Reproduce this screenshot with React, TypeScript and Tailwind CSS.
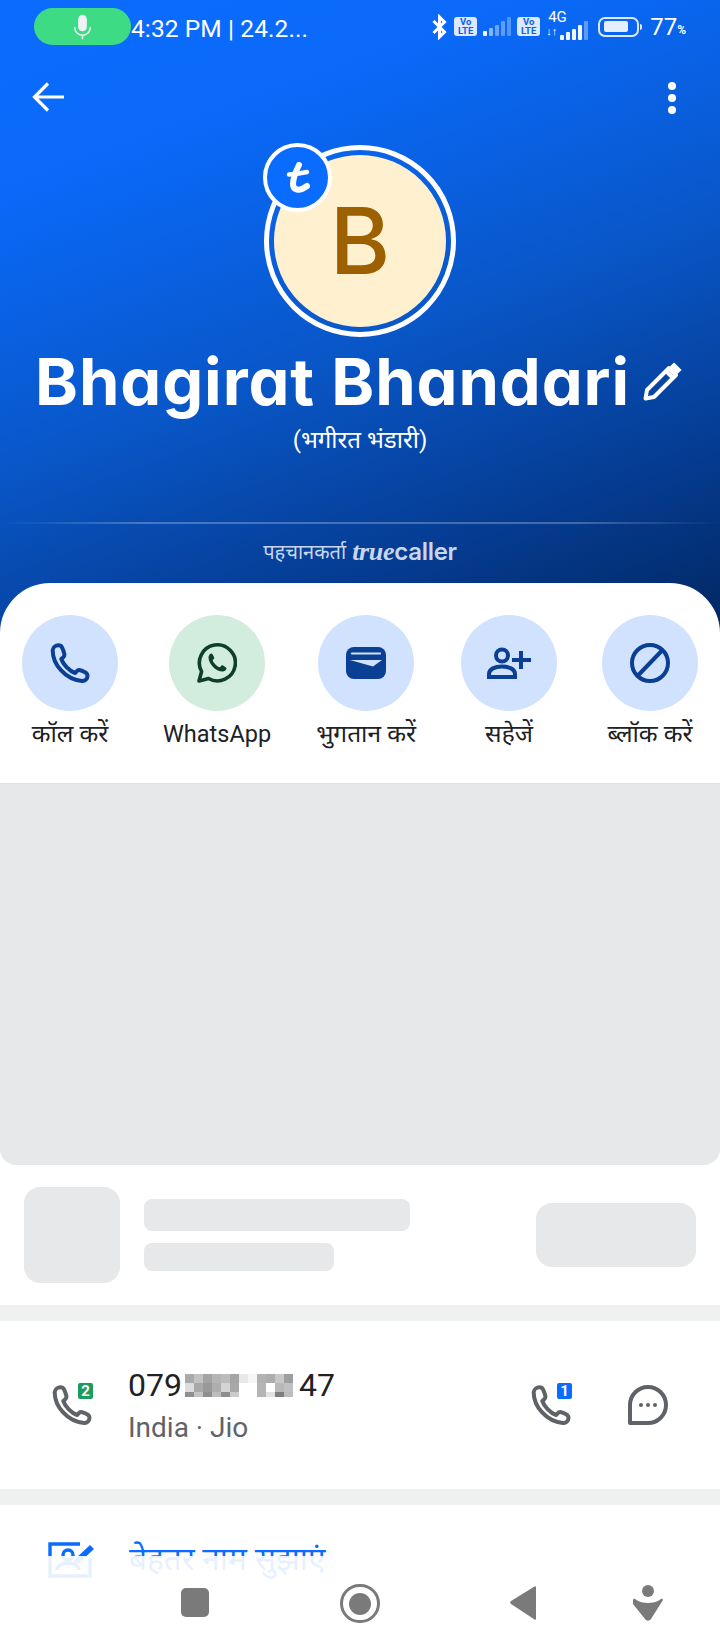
import React from "react";

const SANS = "font-['Roboto','Noto_Sans','Noto_Sans_Devanagari','Lohit_Devanagari',sans-serif]";

const Phone = ({ className = "", color = "#0b3f93" }: { className?: string; color?: string }) => (
  <svg viewBox="0 0 40 40" className={className} fill="none" stroke={color} strokeWidth={4} strokeLinejoin="round">
    <path d="M8.500 2.200c-3 0-5.600 2.200-5.800 5C2.600 21 15 36.500 32 38c2.800.2 5.500-2 5.500-5 0-1.800-.6-2.800-2-3.600-2-1.100-3.800-1.800-5.300-2.200-1.600-.4-2.800.1-3.700 1.200l-1.300 1.600C19 28 13 21 11.300 16l2-1.800c1-1 1.300-2.200 1-3.500C13.800 8.500 13 6.300 12 4.300 11.200 2.700 10 2.200 8.500 2.200Z" />
  </svg>
);

const Action = ({ label, bg, children, latin }: { label: string; bg: string; children: React.ReactNode; latin?: boolean }) => (
  <div className="flex min-w-[96px] flex-col items-center">
    <div className={`flex h-24 w-24 items-center justify-center rounded-full ${bg}`}>{children}</div>
    <span className={`mt-[8px] whitespace-nowrap leading-[30px] text-[#202124] ${latin ? "text-[23.5px]" : "text-[24.5px]"} ${SANS}`}>{label}</span>
  </div>
);

const PIX = [
  "#aaa #c2c2c2 #a4a4a4 #b5b5b5 #bcbcbc #a5a5a5 #e8e8e8 #f6f6f6 #b2b2b2 #adadad #c8c8c8 #9e9e9e",
  "#dcdcdc #a8a8a8 #999 #aeaeae #d4d4d4 #a8a8a8 #fff #fff #b5b5b5 #fff #b8b8b8 #c0c0c0",
  "#8f8f8f #c4c4c4 #8e8e8e #bdbdbd #8e8e8e #cacaca #fff #fff #b5b5b5 #e2e2e2 #7e7e7e #bcbcbc",
];

const Bars = ({ c }: { c: string[] }) => {
  const hs = ["h-[5px]", "h-[8px]", "h-[11px]", "h-[15px]", "h-[19px]"];
  return (
    <div className="flex h-[19px] items-end gap-[2px]">
      {hs.map((h, i) => (
        <span key={i} className={`w-[4px] rounded-[1px] ${h} ${c[i]}`} />
      ))}
    </div>
  );
};

const Volte = () => (
  <div className="flex h-[19px] w-[23px] flex-col items-center justify-center rounded-[3px] bg-[#dce9ff] font-['Roboto'] text-[9.5px] font-bold leading-[8.500px] text-[#0a63e8]">
    <span>Vo</span>
    <span>LTE</span>
  </div>
);

export default function App() {
  return (
    <div className={`relative h-[1650px] w-[720px] overflow-hidden bg-white ${SANS}`}>
      {/* Hero */}
      <div className="relative h-[640px] bg-[linear-gradient(160deg,#0a6cff_0%,#0a69f8_22%,#0957c9_52%,#053c92_78%,#02265f_100%)] text-white">
        {/* Status bar */}
        <div className="flex h-[53px] items-start pl-[34px] pr-[34px] pt-[8px]">
          <div className="flex h-[37px] w-[97px] items-center justify-center rounded-full bg-[#3ddc84]">
            <svg viewBox="0 0 24 30" className="h-[26px] w-[21px]" fill="none">
              <rect x="7" y="1" width="10" height="19" rx="5" fill="#eef2f6" />
              <path d="M3 15c0 6 4 9.500 9 9.500s9-3.500 9-9.500M12 24.500V29" stroke="#eef2f6" strokeWidth="1.800" />
            </svg>
          </div>
          <span className="mt-[2px] font-['Roboto'] text-[24.5px] leading-[37px] tracking-[0.1px]">4:32 PM | 24.2...</span>
          <div className="ml-auto flex h-[37px] items-center">
            <svg viewBox="0 0 16 26" className="h-[26px] w-[17px]" fill="none" stroke="#fff" strokeWidth="3">
              <path d="M2 7l11 11-5 5V3l5 5L2 19" />
            </svg>
            <div className="ml-[6px]"><Volte /></div>
            <div className="ml-[6px]"><Bars c={["bg-white/95", "bg-white/50", "bg-white/40", "bg-white/35", "bg-white/30"]} /></div>
            <div className="ml-[6px]"><Volte /></div>
            <div className="relative ml-[6px] h-[26px] w-[42px]">
              <span className="absolute left-[2px] top-[-4px] font-['Roboto'] text-[15px] leading-[15px]">4G</span>
              <span className="absolute left-0 top-[12px] font-['Roboto'] text-[11px] font-bold leading-[11px]">↓↑</span>
              <div className="absolute bottom-[0px] right-0"><Bars c={["bg-white/95", "bg-white/95", "bg-white/95", "bg-white/95", "bg-white/35"]} /></div>
            </div>
            <div className="ml-[10px] flex h-[20px] w-[41px] items-center rounded-[7px] border-2 border-[#dbe8ff] px-[4px]">
              <div className="h-[11px] w-[24px] rounded-[2px] bg-[#e6efff]" />
            </div>
            <span className="ml-[1px] h-[6px] w-[2px] rounded-r bg-[#dbe8ff]" />
            <span className="ml-[8px] mt-[2px] font-['Roboto'] text-[24px] leading-[37px]">77</span>
            <span className="mt-[8px] font-['Roboto'] text-[12px] font-bold leading-[37px]">%</span>
          </div>
        </div>

        {/* Toolbar */}
        <div className="flex h-[72px] items-start justify-between pl-[32px] pr-[44px] pt-[29px]">
          <svg viewBox="0 0 32 30" className="h-[30px] w-[32px]" fill="none" stroke="#fff" strokeWidth="3.200">
            <path d="M32 15H3M16 1.500L2.500 15 16 28.500" />
          </svg>
          <div className="flex flex-col gap-[4px]">
            <span className="h-[8px] w-[8px] rounded-full bg-white" />
            <span className="h-[8px] w-[8px] rounded-full bg-white" />
            <span className="h-[8px] w-[8px] rounded-full bg-white" />
          </div>
        </div>

        {/* Avatar */}
        <div className="relative mx-auto mt-[20px] flex h-[192px] w-[192px] items-center justify-center rounded-full border-[5px] border-white">
          <div className="flex h-[172px] w-[172px] items-center justify-center rounded-full bg-[#fff1cf] font-['Inter'] text-[92px] font-medium leading-none text-[#9c6000]">
            B
          </div>
          <div className="absolute left-[-6px] top-[-7px] flex h-[69px] w-[69px] items-center justify-center rounded-full border-[4px] border-white bg-[#0a6cff]">
            <svg viewBox="0 0 24 32" className="h-[32px] w-[24px]" fill="none" stroke="#fff" strokeWidth="6" strokeLinecap="round" strokeLinejoin="round">
              <path d="M13 3C10 9 7 16 7 22c0 6 6 8 14 2" />
              <path d="M3 12.500C9 12 14 11.500 21 10" strokeWidth="4.500" />
            </svg>
          </div>
        </div>

        {/* Name */}
        <div className="relative mt-[3px] flex h-[84px] items-center pl-[35px]">
          <span className="whitespace-nowrap font-['Inter'] text-[65px] font-bold leading-[84px] tracking-[0.9px] [font-feature-settings:'cv11']">
            Bhagirat Bhandari
          </span>
          <svg viewBox="0 0 40 40" className="ml-[12px] h-[40px] w-[40px]" fill="none" stroke="#fff" strokeWidth="4" strokeLinejoin="round">
            <path d="M3.500 36.500l1.500-8.500L27 6l7 7-22 22-8.500 1.500ZM24 9l7 7" />
            <path d="M30 2.500l7.500 7.500" strokeWidth="6" />
          </svg>
        </div>
        <p className="mt-0 text-center text-[24px] leading-[32px]">(भगीरत भंडारी)</p>

        {/* Divider */}
        <div className="mt-[66px] h-[2px] bg-[linear-gradient(90deg,transparent,rgba(255,255,255,0.25)_20%,rgba(255,255,255,0.25)_80%,transparent)]" />

        {/* Truecaller */}
        <div className="mt-[14px] flex h-[28px] items-center justify-center gap-[6px] text-[#c8d6ee]">
          <span className="text-[20px] leading-[28px]">पहचानकर्ता</span>
          <span className="font-['Inter'] text-[24px] font-semibold leading-[28px] tracking-[-0.3px]">
            <span className="font-['Liberation_Serif'] text-[26px] font-bold italic">true</span>caller
          </span>
        </div>
      </div>

      {/* Body */}
      <div className="absolute left-0 right-0 top-[583px]">
        <div className="rounded-t-[50px] bg-white">
          <div className="flex h-[200px] items-start justify-between px-[22px] pt-[32px]">
            <Action label="कॉल करें" bg="bg-[#d0e2fd]">
              <Phone className="h-[40px] w-[40px]" />
            </Action>
            <Action label="WhatsApp" bg="bg-[#d2ecdd]" latin>
              <svg viewBox="0 0 40 40" className="h-[40px] w-[40px]" fill="none">
                <path d="M2 38l2.600-9.500A18 18 0 1 1 11.500 35.500L2 38Z" stroke="#0e3f27" strokeWidth="3.600" strokeLinejoin="round" />
                <path d="M14.500 10.500c-1.500 0-3 1.800-3 4 0 6 7 14 14 14 2.200 0 4-1.700 4-3.200 0-.8-3.500-3-4.500-3-.8 0-1.500 2-2.300 2-2 0-7-5-7-7 0-.8 1.600-1.400 1.600-2.300 0-1-1.800-4.500-2.800-4.500Z" fill="#0e3f27" />
              </svg>
            </Action>
            <Action label="भुगतान करें" bg="bg-[#d0e2fd]">
              <svg viewBox="0 0 40 32" className="h-[32px] w-[40px]">
                <rect width="40" height="32" rx="8" fill="#0b3f93" />
                <path d="M6 6.500h28" stroke="#d0e2fd" strokeWidth="2.200" strokeLinecap="round" />
                <path d="M4 13h32L27 19.500 4 13Z" fill="#d0e2fd" />
              </svg>
            </Action>
            <Action label="सहेजें" bg="bg-[#d0e2fd]">
              <svg viewBox="0 0 44 32" className="h-[32px] w-[44px]" fill="none" stroke="#0b3f93" strokeWidth="4">
                <circle cx="15" cy="8.500" r="6" />
                <path d="M2 30v-3c0-5 6-7.500 13-7.500s13 2.500 13 7.500v3H2Z" />
                <path d="M34 4v18M25 13h19" />
              </svg>
            </Action>
            <Action label="ब्लॉक करें" bg="bg-[#d0e2fd]">
              <svg viewBox="0 0 40 40" className="h-[40px] w-[40px]" fill="none" stroke="#0b3f93" strokeWidth="4">
                <circle cx="20" cy="20" r="18" />
                <path d="M7.500 33 32.500 7" />
              </svg>
            </Action>
          </div>

          {/* Ad placeholder */}
          <div className="h-[382px] rounded-b-[16px] border-t border-[#e0e1e3] bg-[#e7e8ea]" />

          {/* Skeleton row */}
          <div className="flex h-[140px] items-center pl-[24px] pr-[24px]">
            <div className="h-[96px] w-[96px] rounded-[16px] bg-[#e7e8ea]" />
            <div className="ml-[24px] flex flex-col gap-[12px]">
              <div className="h-[32px] w-[266px] rounded-[8px] bg-[#e7e8ea]" />
              <div className="h-[28px] w-[190px] rounded-[8px] bg-[#e7e8ea]" />
            </div>
            <div className="ml-auto h-[64px] w-[160px] rounded-[16px] bg-[#e7e8ea]" />
          </div>
          <div className="h-[16px] bg-[#eff0f0]" />

          {/* Phone row */}
          <div className="flex h-[168px] items-center pl-[52px] pr-[52px]">
            <div className="relative h-[40px] w-[40px]">
              <Phone className="h-[40px] w-[40px]" color="#5f6368" />
              <span className="absolute right-[-1px] top-[-2px] flex h-[16px] w-[15px] items-center justify-center rounded-[2px] bg-[#1a9d5c] font-['Roboto'] text-[15px] font-bold leading-none text-white">2</span>
            </div>
            <div className="ml-[36px] mt-[2px]">
              <div className="flex h-[38px] items-center font-['Roboto'] text-[32px] leading-[38px] text-[#202124]">
                <span>079</span>
                <div className="w-[117px] pl-[3px]">
                  <div className="h-[23px] w-[108px]">
                    {PIX.map((row, i) => (
                      <div key={i} className={`flex ${i === 2 ? "h-[5px]" : "h-[9px]"}`}>
                        {row.split(" ").map((c, j) => (
                          <span key={j} className="flex-1" style={{ background: c }} />
                        ))}
                      </div>
                    ))}
                  </div>
                </div>
                <span>47</span>
              </div>
              <div className="mt-[6px] font-['Roboto'] text-[28px] leading-[36px] text-[#5f6368]">India · Jio</div>
            </div>
            <div className="ml-auto flex items-center gap-[57px]">
              <div className="relative h-[40px] w-[40px]">
                <Phone className="h-[40px] w-[40px]" color="#5f6368" />
                <span className="absolute right-[-1px] top-[-2px] flex h-[16px] w-[15px] items-center justify-center rounded-[2px] bg-[#0a6cff] font-['Roboto'] text-[15px] font-bold leading-none text-white">1</span>
              </div>
              <svg viewBox="0 0 40 40" className="h-[40px] w-[40px]" fill="none">
                <path d="M2 38V20a18 18 0 1 1 18 18H2Z" stroke="#5f6368" strokeWidth="4" strokeLinejoin="round" />
                <circle cx="13" cy="20" r="2" fill="#5f6368" />
                <circle cx="20" cy="20" r="2" fill="#5f6368" />
                <circle cx="27" cy="20" r="2" fill="#5f6368" />
              </svg>
            </div>
          </div>
          <div className="h-[16px] bg-[#eff0f0]" />

          {/* Suggest name */}
          <div className="flex h-[120px] items-start pl-[48px] pt-[37px]">
            <svg viewBox="0 0 48 36" className="h-[36px] w-[48px]" fill="none" stroke="#0a6cff" strokeWidth="3.400">
              <path d="M32 2H2v32h40V16" />
              <circle cx="20" cy="13" r="5" />
              <path d="M9 28c0-4 5-7 11-7s11 3 11 7" />
              <path d="M26 18l16-15 4 4-15 14-6 1 1-4Z" fill="#0a6cff" stroke="none" />
            </svg>
            <span className="ml-[33px] text-[31.5px] leading-[36px] text-[#0a6cff]">बेहतर नाम सुझाएं</span>
          </div>
        </div>
      </div>

      {/* Navigation bar overlay */}
      <div className="absolute bottom-0 left-0 right-0 h-[94px] bg-white/90">
        <div className="absolute left-[181px] top-[32px] h-[29px] w-[28px] rounded-[5px] bg-[#7a7a7a]" />
        <div className="absolute left-[340px] top-[28px] flex h-[39px] w-[40px] items-center justify-center rounded-full border-[3px] border-[#7a7a7a]">
          <div className="h-[22px] w-[22px] rounded-full bg-[#7a7a7a]" />
        </div>
        <svg viewBox="0 0 26 34" className="absolute left-[510px] top-[30px] h-[34px] w-[26px]">
          <path d="M26 1v32a1 1 0 0 1-1.500.5L1 18a2 2 0 0 1 0-3L24.500.5A1 1 0 0 1 26 1Z" fill="#7a7a7a" />
        </svg>
        <svg viewBox="0 0 32 36" className="absolute left-[632px] top-[29px] h-[36px] w-[32px]">
          <circle cx="16" cy="6" r="6" fill="#7a7a7a" />
          <path d="M1 15c0-1 1-1.500 2-1 4 3 9 4 13 4s9-1 13-4c1-.5 2-0 2 1l-12 19c-1.500 2-4.500 2-6 0L1 19v-4Z" fill="#7a7a7a" />
        </svg>
      </div>
    </div>
  );
}
